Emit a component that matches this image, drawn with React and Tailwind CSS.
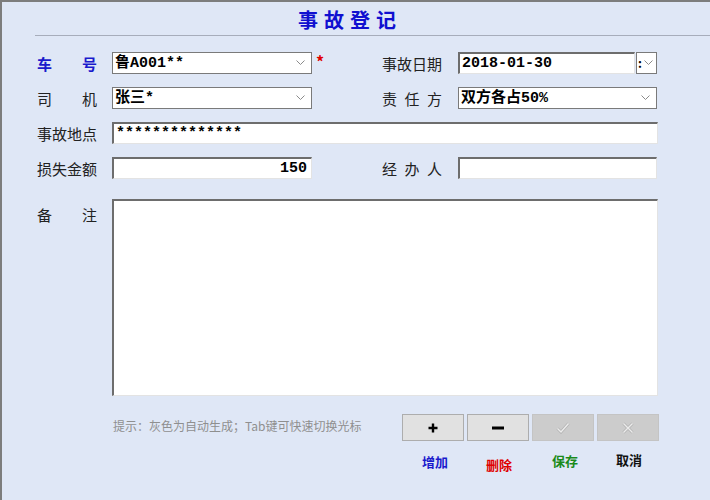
import React from 'react';

const cjk = "font-['Noto_Sans_CJK_SC',sans-serif]";
const mono = "font-['Liberation_Mono','Noto_Sans_CJK_SC',monospace]";

const Chevron = () => (
  <svg width="9" height="6" viewBox="0 0 9 6" className="shrink-0">
    <path d="M0.5 0.5 L4.5 4.5 L8.5 0.5" fill="none" stroke="#8a8a8a" strokeWidth="1" />
  </svg>
);

// combo box with thin border and chevron
const Combo = ({ value, width }) => (
  <div className={`${width} h-[22px] bg-white border border-[#7a7a7a] flex items-center pl-[2px] pr-[6px]`}>
    <span className={`flex-1 ${mono} font-bold text-[15px] leading-none text-black`}>{value}</span>
    <Chevron />
  </div>
);

// sunken text box like classic windows edit control
const Edit = ({ value = '', width, right = false, height = 'h-[22px]' }) => (
  <div
    className={`${width} ${height} bg-white border-t-2 border-l-2 border-b border-r border-t-[#6d6d6d] border-l-[#6d6d6d] border-b-[#e3e3e3] border-r-[#e3e3e3] flex items-center px-[2px] ${right ? 'justify-end pr-[4px]' : ''}`}
  >
    <span className={`${mono} font-bold text-[15px] leading-none text-black`}>{value}</span>
  </div>
);

const Label = ({ chars, blue = false }) => (
  <div
    className={`w-[60px] flex justify-between ${cjk} text-[15px] leading-none ${blue ? 'text-[#1a1acc] font-bold' : 'text-[#222]'}`}
  >
    {chars.map((c, i) => (
      <span key={i}>{c}</span>
    ))}
  </div>
);

const ToolButton = ({ disabled, children }) => (
  <div
    className={`w-[62px] h-[27px] flex items-center justify-center border ${disabled ? 'bg-[#cccccc] border-[#c4c4c4]' : 'bg-[#e1e1e1] border-[#adadad]'}`}
  >
    {children}
  </div>
);

export default function App() {
  return (
    <div className={`w-[710px] h-[500px] bg-[#dfe7f6] border-t-2 border-l-2 border-[#7d7d7d] overflow-hidden flex flex-col ${cjk}`}>
      {/* title */}
      <div className="h-[32px] flex items-end justify-center pb-[4px] pr-[12px]">
        <h1 className="text-[20px] leading-none font-bold text-[#1010d0] tracking-[6px]">事故登记</h1>
      </div>
      <div className="ml-[33px] h-[1px] bg-[#a7adbb] mt-[1px]" />

      <div className="pl-[35px] pt-[16px] flex flex-col">
        {/* row 1 */}
        <div className="h-[22px] flex items-center">
          <Label chars={['车', '号']} blue />
          <div className="ml-[15px]">
            <Combo value="鲁A001**" width="w-[200px]" />
          </div>
          <div className="w-[70px] self-start pl-[4px] pt-[1px] text-[#e00000] font-bold text-[16px] leading-none">*</div>
          <Label chars={['事', '故', '日', '期']} />
          <div className="ml-[16px] flex">
            <Edit value="2018-01-30" width="w-[177px]" />
            <div className="ml-[1px] w-[21px] h-[22px] bg-white border border-[#7a7a7a] flex items-center pl-[1px] gap-[2px]">
              <span className="text-[12px] leading-none text-black font-bold">:</span>
              <Chevron />
            </div>
          </div>
        </div>

        {/* row 2 */}
        <div className="h-[22px] mt-[13px] flex items-center">
          <Label chars={['司', '机']} />
          <div className="ml-[15px]">
            <Combo value="张三*" width="w-[200px]" />
          </div>
          <div className="w-[70px]" />
          <Label chars={['责', '任', '方']} />
          <div className="ml-[16px]">
            <Combo value="双方各占50%" width="w-[199px]" />
          </div>
        </div>

        {/* row 3 */}
        <div className="h-[22px] mt-[13px] flex items-center">
          <Label chars={['事', '故', '地', '点']} />
          <div className="ml-[15px]">
            <Edit value="**************" width="w-[546px]" />
          </div>
        </div>

        {/* row 4 */}
        <div className="h-[22px] mt-[13px] flex items-center">
          <Label chars={['损', '失', '金', '额']} />
          <div className="ml-[15px]">
            <Edit value="150" width="w-[200px]" right />
          </div>
          <div className="w-[70px]" />
          <Label chars={['经', '办', '人']} />
          <div className="ml-[16px]">
            <Edit width="w-[199px]" />
          </div>
        </div>

        {/* remarks */}
        <div className="mt-[20px] flex items-start">
          <div className="pt-[8px]">
            <Label chars={['备', '注']} />
          </div>
          <div className="ml-[15px]">
            <Edit width="w-[546px]" height="h-[197px]" />
          </div>
        </div>

        {/* footer */}
        <div className="mt-[18px] flex">
          <div className="w-[289px] ml-[76px] pt-[6px] text-[12px] leading-none text-[#8f8f8f]">
            提示：灰色为自动生成；Tab键可快速切换光标
          </div>
          <div className="flex flex-col">
            <div className="flex gap-[3px]">
              <ToolButton>
                <svg width="10" height="10" viewBox="0 0 10 10">
                  <path d="M5 0.5 V9.5 M0.5 5 H9.5" stroke="#000" strokeWidth="2.4" />
                </svg>
              </ToolButton>
              <ToolButton>
                <svg width="12" height="4" viewBox="0 0 12 4">
                  <rect x="0" y="0.5" width="12" height="3" fill="#000" />
                </svg>
              </ToolButton>
              <ToolButton disabled>
                <svg width="14" height="12" viewBox="0 0 14 12">
                  <path d="M1.5 6.5 L5 10 L12.5 1.5" fill="none" stroke="#b4b4b4" strokeWidth="3" />
                  <path d="M1.5 6.5 L5 10 L12.5 1.5" fill="none" stroke="#ececec" strokeWidth="1.4" />
                </svg>
              </ToolButton>
              <ToolButton disabled>
                <svg width="12" height="12" viewBox="0 0 12 12">
                  <path d="M1.5 1.5 L10.5 10.5 M10.5 1.5 L1.5 10.5" fill="none" stroke="#b4b4b4" strokeWidth="3" />
                  <path d="M1.5 1.5 L10.5 10.5 M10.5 1.5 L1.5 10.5" fill="none" stroke="#ececec" strokeWidth="1.4" />
                </svg>
              </ToolButton>
            </div>
            <div className="flex gap-[3px] text-[13px] font-bold leading-none">
              <div className="w-[62px] pt-[14px] pl-[4px] text-center text-[#1a1acc]">增加</div>
              <div className="w-[62px] pt-[17px] pl-[2px] text-center text-[#e00000]">删除</div>
              <div className="w-[62px] pt-[13px] pl-[4px] text-center text-[#1a8a1a]">保存</div>
              <div className="w-[62px] pt-[12px] pl-[2px] text-center text-[#111]">取消</div>
            </div>
          </div>
        </div>
      </div>
    </div>
  );
}
